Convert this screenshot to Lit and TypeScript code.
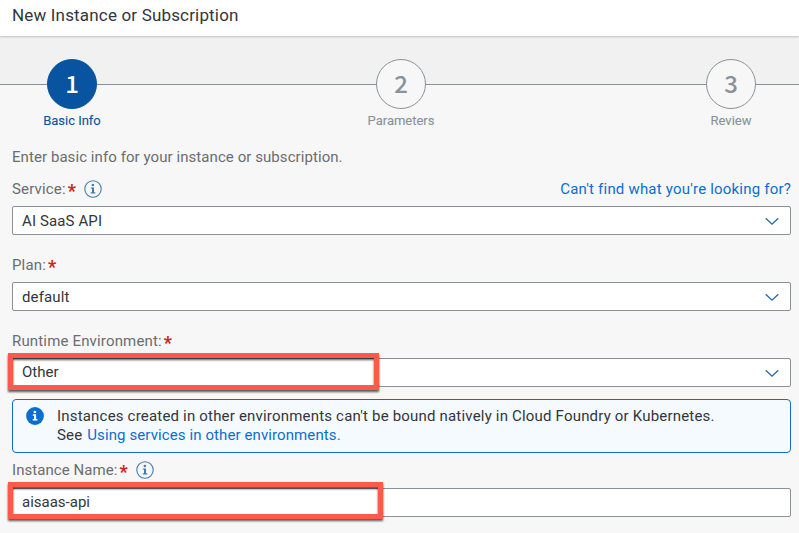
import { LitElement, html, css, svg } from "lit";

const infoOutline = html`<svg class="info" viewBox="0 0 18 18" width="18" height="18">
  ${svg`<circle cx="9" cy="9" r="8.2" fill="none" stroke="#427cac" stroke-width="1.1"/>
  <circle cx="8.9" cy="5.1" r="1.25" fill="#427cac"/>
  <path d="M6.8 7.4h3.2v4.8h1.3v1.2H6.7v-1.2h1.3V8.6H6.8z" fill="#427cac"/>`}
</svg>`;

const infoSolid = html`<svg class="solid" viewBox="0 0 18 18" width="18" height="18">
  ${svg`<circle cx="9" cy="9" r="8.9" fill="#0a6ed1"/>
  <circle cx="8.9" cy="5" r="1.35" fill="#fff"/>
  <path d="M6.8 7.3h3.3v4.8h1.3v1.4H6.7v-1.4H8V8.7H6.8z" fill="#fff"/>`}
</svg>`;

class WizardSteps extends LitElement {
  static styles = css`
    :host { display: grid; grid-template-columns: 329px 330px 1fr; height: 96px; padding-left: 7px; padding-top: 23px;
      box-sizing: border-box; background: linear-gradient(#f1f1f1 48px, #8b8f9b 48px, #8b8f9b 49px, #f7f7f7 49px); }
    .step { width: 130px; display: flex; flex-direction: column; align-items: center; color: #89919a; }
    .num { box-sizing: border-box; width: 50px; height: 50px; border-radius: 50%; border: 1px solid #89919a; background: #f7f7f7;
      display: flex; align-items: center; justify-content: center; font: 500 24px/46px "Noto Sans CJK SC", sans-serif; padding-bottom: 2px; }
    .cap { font-size: 13px; line-height: 16px; margin-top: 4px; white-space: nowrap; letter-spacing: -.02px; -webkit-text-stroke: .1px; }
    .on { color: #0854a0; }
    .on .num { background: #0854a0; border-color: #0854a0; color: #fff; }
  `;
  render() {
    return ["Basic Info", "Parameters", "Review"].map((s, i) => html`
      <div class="step ${i === 0 ? "on" : ""}"><div class="num">${i + 1}</div><div class="cap">${s}</div></div>`);
  }
}
customElements.define("wizard-steps", WizardSteps);

class AppRoot extends LitElement {
  static styles = css`
    :host { display: block; height: 533px; overflow: hidden; background: #f7f7f7; font: 15px/20px Roboto, sans-serif; color: #32363a; }
    header { height: 36px; box-sizing: border-box; padding: 5px 12px 0; background: #fff; font-size: 17px; line-height: 20px;
      letter-spacing: .17px; box-shadow: 0 1px 2px rgba(0,0,0,.2); position: relative; }
    main { padding: 15px 8px 0 12px; }
    .intro { color: #6a6d70; height: 20px; letter-spacing: .07px; }
    .label { display: flex; align-items: center; height: 20px; color: #6a6d70; letter-spacing: .16px; white-space: nowrap; }
    .star { color: #d02020; font-weight: 700; font-size: 18px; line-height: 20px; margin-left: 2px; height: 17px; letter-spacing: 0; }
    .info { margin-left: 8px; }
    .link { color: #0a6ed1; letter-spacing: .2px; }
    .strip .link { letter-spacing: .1px; margin-left: 1px; }
    .label .link { margin-left: auto; }
    .field { position: relative; box-sizing: border-box; height: 29px; border: 1px solid #89919a; border-radius: 2px; background: #fff;
      display: flex; align-items: center; justify-content: space-between; padding: 0 10px 0 9px; letter-spacing: .12px; }
    .value { padding-bottom: 0; }
    .value.up { padding-bottom: 2px; letter-spacing: 0; }
    .first { margin-top: 12px; margin-bottom: 7px; }
    .gap { margin-top: 20px; margin-bottom: 7px; }
    .mark { position: absolute; box-sizing: border-box; left: -5px; top: -6px; height: 37px; border: 5px solid #fe5a4c;
      filter: drop-shadow(0 2px 1px rgba(0,0,0,.65)); }
    .env { width: 371px; }
    .name { width: 375px; top: -7px; }
    .strip { box-sizing: border-box; height: 54px; margin-top: 12px; border: 1px solid #0a6ed1; border-radius: 4px; background: #f5faff;
      display: flex; padding: 7px 0 0 13px; line-height: 19px; letter-spacing: .19px; }
    .solid { margin-right: 13px; }
    .last { margin-top: 7px; margin-bottom: 8px; letter-spacing: .06px; }
  `;
  label(text: string, cls: string, info = false, extra: unknown = "") {
    return html`<div class="label ${cls}">${text}<span class="star">*</span>${info ? infoOutline : ""}${extra}</div>`;
  }
  field(value: string, arrow: boolean, mark = "") {
    return html`<div class="field"><span class="value ${mark ? "up" : ""}">${value}</span>
      ${arrow ? html`<svg width="16" height="16" viewBox="0 0 16 16"><path d="M1.7 5.2 8 11.2 14.3 5.2" fill="none" stroke="#1f64ac" stroke-width="1.2"/></svg>` : ""}
      ${mark ? html`<div class="mark ${mark}"></div>` : ""}</div>`;
  }
  render() {
    return html`
      <header>New Instance or Subscription</header>
      <wizard-steps></wizard-steps>
      <main>
        <div class="intro">Enter basic info for your instance or subscription.</div>
        ${this.label("Service:", "first", true, html`<span class="link">Can't find what you're looking for?</span>`)}
        ${this.field("AI SaaS API", true)}
        ${this.label("Plan:", "gap")}
        ${this.field("default", true)}
        ${this.label("Runtime Environment:", "gap")}
        ${this.field("Other", true, "env")}
        <div class="strip">${infoSolid}<div>Instances created in other environments can't be bound natively in Cloud Foundry or Kubernetes.<br>See <span class="link">Using services in other environments.</span></div></div>
        ${this.label("Instance Name:", "last", true)}
        ${this.field("aisaas-api", false, "name")}
      </main>`;
  }
}
customElements.define("app-root", AppRoot);
